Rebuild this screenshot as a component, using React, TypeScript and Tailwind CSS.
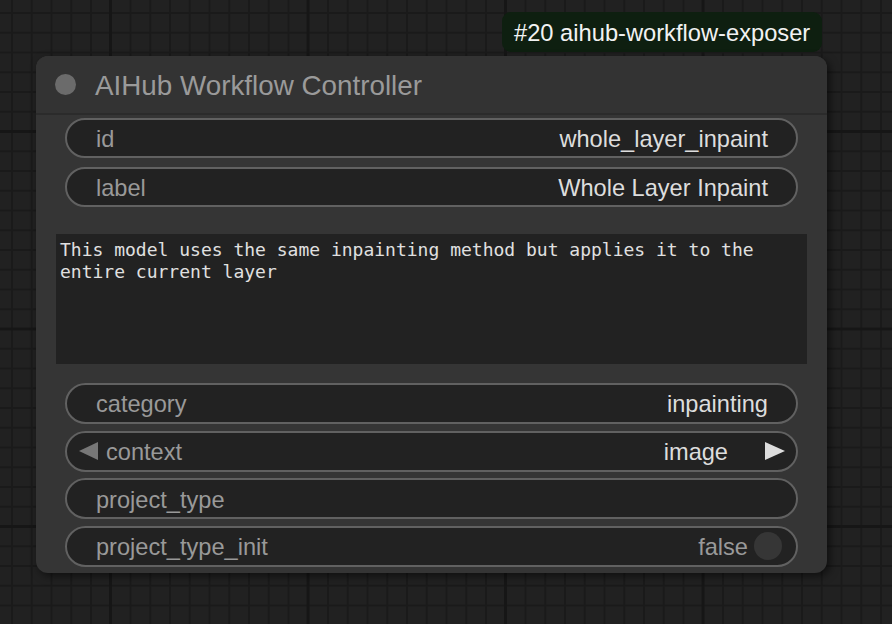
import React from 'react';

const SANS = { fontFamily: '"Liberation Sans", Arial, sans-serif' };

const Row = ({ label, value, h = 'h-[40px]' }: { label: string; value?: string; h?: string }) => (
  <div className={`flex ${h} items-center rounded-full border-2 border-[#616161] bg-[#222222] pl-[29px] pr-[28px] pt-[3px] text-[23.6px] leading-none`}>
    <span className="text-[#999999]">{label}</span>
    <span className="ml-auto text-[#dddddd]">{value}</span>
  </div>
);

export default function App() {
  return (
    <div
      className="relative h-[624px] w-[892px] overflow-hidden bg-[#212121] [background-image:linear-gradient(to_right,#161616_3px,transparent_3px),linear-gradient(to_bottom,#161616_3px,transparent_3px),linear-gradient(to_right,#1a1a1a_2px,transparent_2px),linear-gradient(to_bottom,#1a1a1a_2px,transparent_2px)] [background-size:197.5px_197.5px,197.5px_197.5px,19.75px_19.75px,19.75px_19.75px] [background-position:109px_0,0_130px,11px_0,0_12px]"
      style={SANS}
    >
      {/* node badge */}
      <div className="absolute left-[502px] top-[12px] flex h-[40px] w-[320px] items-center rounded-[9px] bg-[#0e1f10] pl-[12px] pt-[3px] text-[23.7px] text-[#f2f2f2]">
        #20 aihub-workflow-exposer
      </div>

      {/* node */}
      <div className="absolute left-[36px] top-[56px] flex h-[517px] w-[791px] flex-col rounded-[12px] bg-[#353535] shadow-[3px_3px_8px_rgba(0,0,0,0.55)]">
        <div className="flex h-[59px] items-center rounded-t-[12px] border-b-2 border-[#2b2b2b] bg-[#333333]">
          <div className="ml-[19px] h-[21px] w-[21px] rounded-full bg-[#6b6b6b]" />
          <span className="ml-[19px] pt-[2px] text-[27.8px] leading-none text-[#9a9a9a]">AIHub Workflow Controller</span>
        </div>

        <div className="flex flex-col gap-[9px] px-[29px] pt-[3px]">
          <Row label="id" value="whole_layer_inpaint" />
          <Row label="label" value="Whole Layer Inpaint" />
        </div>

        <div className="mx-[20px] mt-[27px] h-[130px] bg-[#222222] px-[4px] pt-[5px] text-[18px] leading-[22px] text-[#e0e0e0] [font-family:'DejaVu_Sans_Mono',monospace]">
          This model uses the same inpainting method but applies it to the entire current layer
        </div>

        <div className="mt-[19px] flex flex-col gap-[6.67px] px-[29px]">
          <Row label="category" value="inpainting" h="h-[41px]" />
          <div className="flex h-[41px] items-center rounded-full border-2 border-[#616161] bg-[#222222] pl-[12px] pr-[11px] text-[23.6px] leading-none">
            <svg width="20" height="18" viewBox="0 0 20 18" className="mr-[7px]">
              <polygon points="19,0 19,18 0,9" fill="#777777" />
            </svg>
            <span className="pt-[3px] text-[#999999]">context</span>
            <span className="ml-auto pt-[3px] text-[#dddddd]">image</span>
            <svg width="20" height="18" viewBox="0 0 20 18" className="ml-[37px]">
              <polygon points="0,0 0,18 20,9" fill="#dddddd" />
            </svg>
          </div>
          <Row label="project_type" h="h-[41px]" />
          <div className="flex h-[41px] items-center rounded-full border-2 border-[#616161] bg-[#222222] pl-[29px] pr-[14px] text-[23.6px] leading-none">
            <span className="pt-[3px] text-[#999999]">project_type_init</span>
            <span className="ml-auto pt-[3px] text-[#999999]">false</span>
            <div className="ml-[6px] h-[28px] w-[28px] rounded-full bg-[#363636]" />
          </div>
        </div>
      </div>
    </div>
  );
}
